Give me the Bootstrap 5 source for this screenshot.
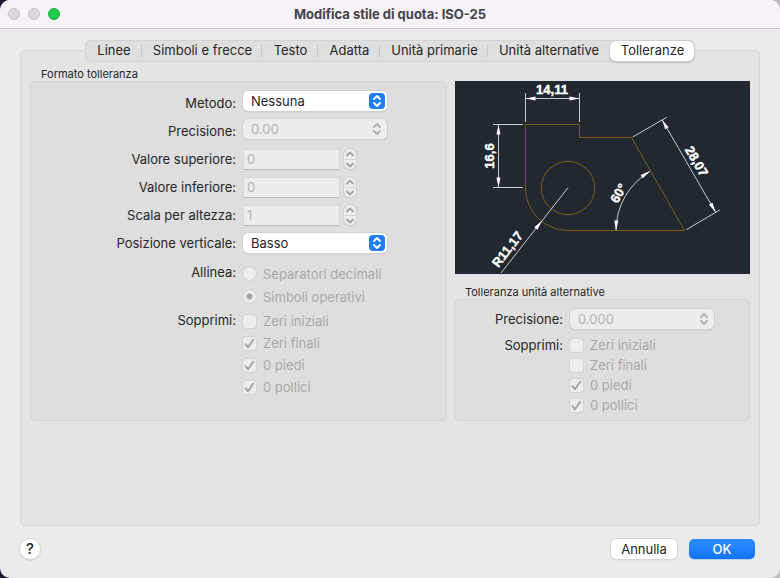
<!DOCTYPE html>
<html lang="it">
<head>
<meta charset="utf-8">
<meta name="viewport" content="width=device-width, initial-scale=1">
<title>Modifica stile di quota: ISO-25</title>
<link rel="stylesheet" href="https://cdn.jsdelivr.net/npm/bootstrap@5.3.0/dist/css/bootstrap.min.css">
<style>
  body { font: 13px/16px Inter, "Liberation Sans", sans-serif; color: #262626; background: linear-gradient(90deg, #1c1b29 50%, #bdbdbd 50%); }
  .win { background: #ebebeb; border-radius: 10px; }
  .titlebar { display: grid; grid-template-columns: 1fr auto 1fr; height: 29px; padding: 0 8px; background: #f7f2f7; border-bottom: 1px solid #c9c5c9; color: #464446; }
  .titlebar h1 { font-size: 13px; line-height: 16px; font-weight: 700; }
  .light { width: 12px; height: 12px; padding: 0; border-radius: 50%; border: 1px solid #c3bec3; background: #dcd7dc; }
  .light.zoom { background: #1fca4d; border-color: #17ad3e; }

  .content { padding: 11px 20px 0; }
  .tabs { display: grid; grid-template-columns: 57fr 120fr 56fr 62fr 108fr 121fr 86fr; width: 610px; max-width: 100%; height: 22px; background: #dfdfdf; border-radius: 6px; box-shadow: inset 0 0 0 1px #d3d3d3; z-index: 1; }
  .tabs .nav-link { position: relative; padding: 0 0 0 1px; border-radius: 6px; color: #262626; line-height: 21px; text-align: center; white-space: nowrap; }
  .tabs .nav-link:not(.active)::after { content: ""; position: absolute; right: 0; top: 5px; height: 12px; border-right: 1px solid #c8c8c8; }
  .tabs .nav-link.before-active::after { display: none; }
  .tabs .nav-link.active { background: #fff; color: #262626; box-shadow: 0 0 0 1px #cfcfcf, 0 1px 1px 1px #bbb; margin: 1px; line-height: 19px; }
  .panel { margin-top: -12px; padding: 16px 9px 0; background: #e4e4e4; border: 1px solid #d8d8d8; border-radius: 5px; }
  .columns { display: grid; grid-template-columns: 417fr 296fr; gap: 7px; }
  .legend { float: none; margin: 0; padding-left: 11px; font-size: 11px; line-height: 14px; }
  .group { background: #dedede; border: 1px solid #d3d3d3; border-radius: 5px; }
  .group-main { padding: 7px 0 22px; }
  .group-alt { padding: 9px 0 5px; }
  .preview { margin: 14px 0 11px 1px; }

  .field { display: grid; gap: 7px; align-items: center; }
  .group-main .field { grid-template-columns: 205px 1fr; min-height: 28px; }
  .group-alt .field { grid-template-columns: 108px 1fr; }
  .caption { text-align: right; line-height: 20px; }
  .raised .popup { margin-bottom: 4px; }
  .choices { align-items: start !important; }
  .group-main .align-set { padding: 5px 0 2px; }
  .group-alt .choices { padding-top: 6px; }
  .option { display: flex; align-items: center; gap: 7px; color: #a9a9a9; height: 22px; }
  .align-set .option { height: 23px; }
  .group-alt .option { height: 20px; }
  .option label { line-height: 20px; }

  .popup { position: relative; width: 144px; height: 20px; }
  .popup select { width: 100%; height: 20px; padding: 0 24px 1px 8px; font-size: 13px; line-height: 18px; color: #262626; background: #fff none; border: 0; border-radius: 5px; box-shadow: 0 0 0 1px #d0d0d0, 0 1px 1px #aaa; }
  .popup select:disabled { color: #b3b3b3; background: #ededed none; opacity: 1; }
  .popup svg { position: absolute; right: 2px; top: 2px; pointer-events: none; }
  .num { width: 97px; height: 21px; padding: 0 3px; font-size: 13px; line-height: 19px; border: 1px solid #d6d6d6; border-bottom-color: #bcbcbc; border-radius: 0; }
  .num:disabled { color: #b3b3b3; background: #ededed; }
  .stepper { width: 12px; height: 20px; border-radius: 6px; background: #ededed; box-shadow: 0 0 0 1px #d2d2d2, 0 1px 1px #bbb; }
  .stepper button { height: 10px; padding: 0; border: 0; background: none; line-height: 1; }
  .stepper button + button { border-top: 1px solid #dadada; }
  .stepper svg { display: block; margin: auto; }
  .option .form-check-input { flex: none; width: 13px; height: 13px; margin: 0; border: 0; background-color: #ededed; box-shadow: 0 0 0 1px #d3d3d3; }
  .option .form-check-input[type=checkbox] { border-radius: 3px; }
  .option .form-check-input:disabled, .option .form-check-input:disabled ~ label { opacity: 1; }
  .option .form-check-input:checked[type=checkbox] { background-image: url("data:image/svg+xml,%3Csvg xmlns='http://www.w3.org/2000/svg' viewBox='0 0 13 13'%3E%3Cpath d='M2.500 7.200 5 10.300 10.200 2.800' fill='none' stroke='%23a4a4a4' stroke-width='2' stroke-linecap='round' stroke-linejoin='round'/%3E%3C/svg%3E"); }
  .option .form-check-input:checked[type=radio] { background-image: url("data:image/svg+xml,%3Csvg xmlns='http://www.w3.org/2000/svg' viewBox='0 0 13 13'%3E%3Ccircle cx='6.5' cy='6.5' r='3' fill='%23a4a4a4'/%3E%3C/svg%3E"); }

  .footer-bar { padding: 13px 25px 19px 20px; gap: 12px; }
  .push { width: 66px; height: 20px; padding: 0; font-size: 13px; line-height: 18px; border: 0; border-radius: 5px; background: #fff; color: #262626; box-shadow: 0 0 0 1px #d6d6d6, 0 1px 1px #aaa; }
  .push.primary { color: #fff; font-weight: 500; background: linear-gradient(#2f8dff, #1274fd); box-shadow: 0 1px 1px #b9cdea; }
  .help { width: 20px; height: 20px; padding: 0; border: 0; border-radius: 50%; background: #fff; font-size: 15px; line-height: 20px; font-weight: 500; color: #262626; box-shadow: 0 0 0 1px #dcdcdc, 0 1px 2px #999; }
</style>
</head>
<body>
<svg width="0" height="0" class="position-absolute" aria-hidden="true">
  <defs>
    <g id="updown" fill="none" stroke-width="2" stroke-linecap="round" stroke-linejoin="round"><path d="M5 6 8 3l3 3M5 10l3 3 3-3"/></g>
    <path id="chev-up" d="M1 5.500 4 2.500 7 5.500" fill="none" stroke="#a4a4a4" stroke-width="1.800" stroke-linecap="round" stroke-linejoin="round"/>
    <path id="chev-down" d="M1 2.500 4 5.500 7 2.500" fill="none" stroke="#a4a4a4" stroke-width="1.800" stroke-linecap="round" stroke-linejoin="round"/>
  </defs>
</svg>

<div class="win min-vh-100 d-flex flex-column overflow-hidden">
  <header class="titlebar align-items-center">
    <div class="d-flex gap-2">
      <button type="button" class="light" aria-label="Chiudi"></button>
      <button type="button" class="light" aria-label="Riduci"></button>
      <button type="button" class="light zoom" aria-label="Ingrandisci"></button>
    </div>
    <h1 class="m-0">Modifica stile di quota: ISO-25</h1>
  </header>

  <main class="content flex-grow-1 d-flex flex-column">
    <nav class="tabs nav align-self-center">
      <a class="nav-link" href="#">Linee</a>
      <a class="nav-link" href="#">Simboli e frecce</a>
      <a class="nav-link" href="#">Testo</a>
      <a class="nav-link" href="#">Adatta</a>
      <a class="nav-link" href="#">Unità primarie</a>
      <a class="nav-link before-active" href="#">Unità alternative</a>
      <a class="nav-link active" href="#" aria-current="page">Tolleranze</a>
    </nav>

    <div class="panel flex-grow-1">
      <div class="columns">
        <fieldset class="d-flex flex-column">
          <legend class="legend">Formato tolleranza</legend>
          <div class="group group-main flex-grow-1">
            <div class="field raised">
              <label class="caption" for="metodo">Metodo:</label>
              <div class="popup">
                <select id="metodo" class="form-select"><option>Nessuna</option></select>
                <svg width="16" height="16"><rect width="16" height="16" rx="4" fill="#1f7dfc"/><use href="#updown" stroke="#fff"/></svg>
              </div>
            </div>
            <div class="field raised">
              <label class="caption" for="precisione">Precisione:</label>
              <div class="popup">
                <select id="precisione" class="form-select" disabled><option>0.00</option></select>
                <svg width="16" height="16"><use href="#updown" stroke="#b3b3b3"/></svg>
              </div>
            </div>
            <div class="field">
              <label class="caption" for="superiore">Valore superiore:</label>
              <div class="d-flex gap-1 align-items-center">
                <input id="superiore" class="form-control num" type="text" value="0" disabled>
                <div class="stepper d-flex flex-column">
                  <button type="button" disabled aria-label="Aumenta"><svg width="8" height="8"><use href="#chev-up"/></svg></button>
                  <button type="button" disabled aria-label="Diminuisci"><svg width="8" height="8"><use href="#chev-down"/></svg></button>
                </div>
              </div>
            </div>
            <div class="field">
              <label class="caption" for="inferiore">Valore inferiore:</label>
              <div class="d-flex gap-1 align-items-center">
                <input id="inferiore" class="form-control num" type="text" value="0" disabled>
                <div class="stepper d-flex flex-column">
                  <button type="button" disabled aria-label="Aumenta"><svg width="8" height="8"><use href="#chev-up"/></svg></button>
                  <button type="button" disabled aria-label="Diminuisci"><svg width="8" height="8"><use href="#chev-down"/></svg></button>
                </div>
              </div>
            </div>
            <div class="field">
              <label class="caption" for="scala">Scala per altezza:</label>
              <div class="d-flex gap-1 align-items-center">
                <input id="scala" class="form-control num" type="text" value="1" disabled>
                <div class="stepper d-flex flex-column">
                  <button type="button" disabled aria-label="Aumenta"><svg width="8" height="8"><use href="#chev-up"/></svg></button>
                  <button type="button" disabled aria-label="Diminuisci"><svg width="8" height="8"><use href="#chev-down"/></svg></button>
                </div>
              </div>
            </div>
            <div class="field">
              <label class="caption" for="posizione">Posizione verticale:</label>
              <div class="popup">
                <select id="posizione" class="form-select"><option>Basso</option></select>
                <svg width="16" height="16"><rect width="16" height="16" rx="4" fill="#1f7dfc"/><use href="#updown" stroke="#fff"/></svg>
              </div>
            </div>
            <div class="field choices align-set" role="radiogroup" aria-labelledby="allinea">
              <span class="caption" id="allinea">Allinea:</span>
              <div>
                <div class="option"><input class="form-check-input" type="radio" name="allinea" id="sepdec" disabled><label for="sepdec">Separatori decimali</label></div>
                <div class="option"><input class="form-check-input" type="radio" name="allinea" id="simop" checked disabled><label for="simop">Simboli operativi</label></div>
              </div>
            </div>
            <div class="field choices" role="group" aria-labelledby="sopprimi">
              <span class="caption" id="sopprimi">Sopprimi:</span>
              <div>
                <div class="option"><input class="form-check-input" type="checkbox" id="ziniz" disabled><label for="ziniz">Zeri iniziali</label></div>
                <div class="option"><input class="form-check-input" type="checkbox" id="zfin" checked disabled><label for="zfin">Zeri finali</label></div>
                <div class="option"><input class="form-check-input" type="checkbox" id="piedi" checked disabled><label for="piedi">0 piedi</label></div>
                <div class="option"><input class="form-check-input" type="checkbox" id="pollici" checked disabled><label for="pollici">0 pollici</label></div>
              </div>
            </div>
          </div>
        </fieldset>

        <div class="d-flex flex-column">
          <div class="preview">
            <svg class="d-block w-100" viewBox="0 0 295 193" role="img" aria-label="Anteprima quota">
              <defs><path id="tip" d="M0 0-10-2V2Z" fill="#fff"/></defs>
              <rect width="295" height="193" fill="#212830"/>
              <g fill="none" stroke="#7d5c17">
                <path d="M70.500 43.500h54v13h52L229.500 149.500H113a42.500 42.500 0 0 1-42.500-42.500Z"/>
                <circle cx="113" cy="107" r="26.700"/>
              </g>
              <g fill="none" stroke="#c9cccf">
                <path d="M70.500 12v29M124.500 12v29M70.500 17.500h54"/>
                <path d="M38 43.500h30M38 106.500h30M43.500 43.500v63"/>
                <path d="M177.700 56 211.700 36.300M231.300 148.700 264.700 129M207 38.700 260.700 131.300"/>
                <path d="M161 149.500A68.300 68.300 0 0 1 195 90.500M113 106.700 46 192"/>
              </g>
              <use href="#tip" transform="translate(70.500 17.500) rotate(180)"/>
              <use href="#tip" transform="translate(124.500 17.500)"/>
              <use href="#tip" transform="translate(43.500 43.500) rotate(-90)"/>
              <use href="#tip" transform="translate(43.500 106.500) rotate(90)"/>
              <use href="#tip" transform="translate(207 38.700) rotate(-120)"/>
              <use href="#tip" transform="translate(260.700 131.300) rotate(60)"/>
              <use href="#tip" transform="translate(161 149.500) rotate(92)"/>
              <use href="#tip" transform="translate(195 90) rotate(-34)"/>
              <use href="#tip" transform="translate(87 139.700) rotate(-52)"/>
              <g fill="#fff" stroke="#fff" stroke-width="0.400" font-family="Liberation Sans, Arial, sans-serif" font-size="13" font-weight="700" text-anchor="middle">
                <text x="97" y="13">14,11</text>
                <text transform="translate(34 75) rotate(-90)" y="5">16,6</text>
                <text transform="translate(242 80) rotate(60)" y="5">28,07</text>
                <text transform="translate(163 112) rotate(-60)" y="5">60°</text>
                <text transform="translate(52 168) rotate(-52)" y="5">R11,17</text>
              </g>
            </svg>
          </div>
          <fieldset class="d-flex flex-column flex-grow-1">
            <legend class="legend">Tolleranza unità alternative</legend>
            <div class="group group-alt flex-grow-1">
              <div class="field">
                <label class="caption" for="precisione2">Precisione:</label>
                <div class="popup">
                  <select id="precisione2" class="form-select" disabled><option>0.000</option></select>
                  <svg width="16" height="16"><use href="#updown" stroke="#b3b3b3"/></svg>
                </div>
              </div>
              <div class="field choices" role="group" aria-labelledby="sopprimi2">
                <span class="caption" id="sopprimi2">Sopprimi:</span>
                <div>
                  <div class="option"><input class="form-check-input" type="checkbox" id="ziniz2" disabled><label for="ziniz2">Zeri iniziali</label></div>
                  <div class="option"><input class="form-check-input" type="checkbox" id="zfin2" disabled><label for="zfin2">Zeri finali</label></div>
                  <div class="option"><input class="form-check-input" type="checkbox" id="piedi2" checked disabled><label for="piedi2">0 piedi</label></div>
                  <div class="option"><input class="form-check-input" type="checkbox" id="pollici2" checked disabled><label for="pollici2">0 pollici</label></div>
                </div>
              </div>
            </div>
          </fieldset>
        </div>
      </div>
    </div>
  </main>

  <footer class="footer-bar d-flex align-items-center">
    <button type="button" class="help me-auto" aria-label="Aiuto">?</button>
    <button type="button" class="push">Annulla</button>
    <button type="button" class="push primary">OK</button>
  </footer>
</div>
<script src="https://cdn.jsdelivr.net/npm/bootstrap@5.3.0/dist/js/bootstrap.bundle.min.js"></script>
</body>
</html>
